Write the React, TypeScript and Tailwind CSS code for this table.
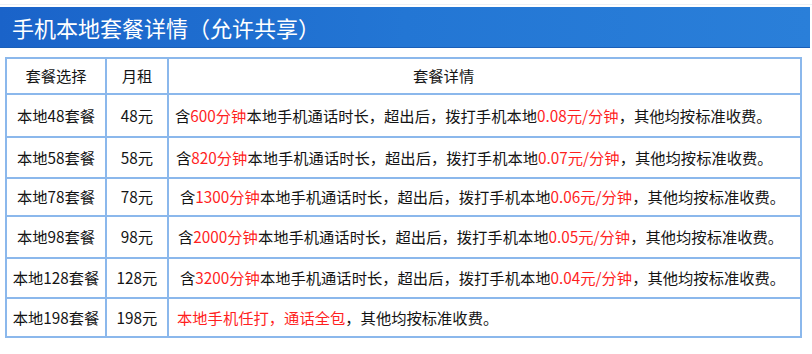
import React from "react";

type Seg = { t: string; red?: boolean };
type Row = { name: string; price: string; h: string; pl: string; segs: Seg[] };

const rows: Row[] = [
  {
    name: "本地48套餐",
    price: "48元",
    h: "h-[43px]",
    pl: "pl-[6px]",
    segs: [
      { t: "含" },
      { t: "600分钟", red: true },
      { t: "本地手机通话时长，超出后，拨打手机本地" },
      { t: "0.08元/分钟", red: true },
      { t: "，其他均按标准收费。" },
    ],
  },
  {
    name: "本地58套餐",
    price: "58元",
    h: "h-[41px]",
    pl: "pl-[7px]",
    segs: [
      { t: "含" },
      { t: "820分钟", red: true },
      { t: "本地手机通话时长，超出后，拨打手机本地" },
      { t: "0.07元/分钟", red: true },
      { t: "，其他均按标准收费。" },
    ],
  },
  {
    name: "本地78套餐",
    price: "78元",
    h: "h-[38px]",
    pl: "pl-[11px]",
    segs: [
      { t: "含" },
      { t: "1300分钟", red: true },
      { t: "本地手机通话时长，超出后，拨打手机本地" },
      { t: "0.06元/分钟", red: true },
      { t: "，其他均按标准收费。" },
    ],
  },
  {
    name: "本地98套餐",
    price: "98元",
    h: "h-[42px]",
    pl: "pl-[9px]",
    segs: [
      { t: "含" },
      { t: "2000分钟", red: true },
      { t: "本地手机通话时长，超出后，拨打手机本地" },
      { t: "0.05元/分钟", red: true },
      { t: "，其他均按标准收费。" },
    ],
  },
  {
    name: "本地128套餐",
    price: "128元",
    h: "h-[40px]",
    pl: "pl-[11px]",
    segs: [
      { t: "含" },
      { t: "3200分钟", red: true },
      { t: "本地手机通话时长，超出后，拨打手机本地" },
      { t: "0.04元/分钟", red: true },
      { t: "，其他均按标准收费。" },
    ],
  },
  {
    name: "本地198套餐",
    price: "198元",
    h: "h-[39px]",
    pl: "pl-[8px]",
    segs: [
      { t: "本地手机任打，通话全包", red: true },
      { t: "，其他均按标准收费。" },
    ],
  },
];

export default function App() {
  return (
    <div
      className="w-[812px] h-[354px] bg-white overflow-hidden text-[#141414]"
      style={{ fontFamily: '"Noto Sans CJK SC", "Noto Sans", sans-serif' }}
    >
      <div className="h-[7px] border-t border-[#eef0f3] mt-[4px] -mb-[4px]" />
      <div className="w-[810px] h-[41px] bg-gradient-to-r from-[#1a63c9] via-[#2376d4] to-[#2a7fd9] border-b border-[#1a5fb8] flex items-center pl-[12px]">
        <span className="text-white text-[22px] leading-none">
          手机本地套餐详情（允许共享）
        </span>
      </div>
      <div className="h-[9px]" />
      <div className="ml-[5px] w-[797px] border-2 border-[#8bb8ec] text-[15.3px] leading-none">
        <div className="flex h-[34px]">
          <div className="w-[98px] flex items-center justify-center">套餐选择</div>
          <div className="w-[62px] border-l-2 border-[#8bb8ec] flex items-center justify-center">月租</div>
          <div className="flex-1 border-l-2 border-[#8bb8ec] flex items-center pl-[244px]">套餐详情</div>
        </div>
        {rows.map((r) => (
          <div key={r.name} className={`flex border-t-2 border-[#8bb8ec] ${r.h}`}>
            <div className="w-[98px] flex items-center justify-center whitespace-nowrap">{r.name}</div>
            <div className="w-[62px] border-l-2 border-[#8bb8ec] flex items-center justify-center">{r.price}</div>
            <div className={`flex-1 border-l-2 border-[#8bb8ec] flex items-center whitespace-nowrap ${r.pl}`}>
              {r.segs.map((s, i) => (
                <span key={i} className={s.red ? "text-[#ff1f1f]" : ""}>
                  {s.t}
                </span>
              ))}
            </div>
          </div>
        ))}
      </div>
    </div>
  );
}
